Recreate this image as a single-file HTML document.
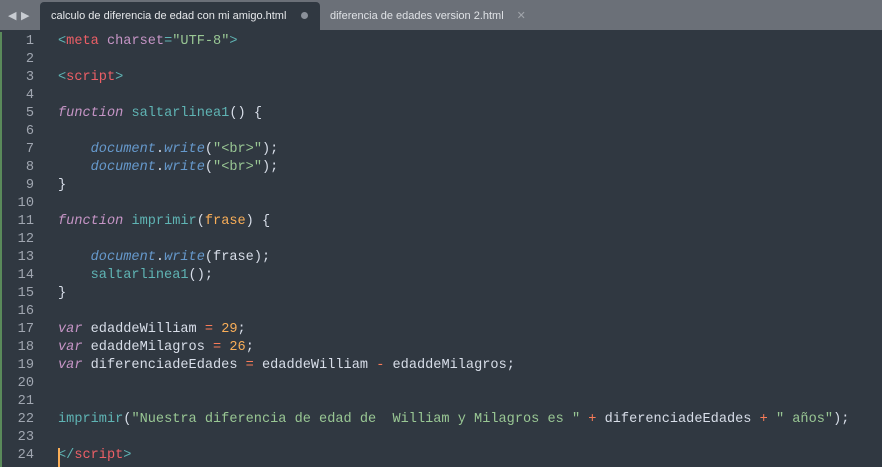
<!DOCTYPE html>
<html><head><meta charset="UTF-8"><style>
body{margin:0;width:882px;height:467px;background:#303841;overflow:hidden;font-family:"Liberation Sans",sans-serif}
.bar{position:absolute;left:0;top:0;width:882px;height:30px;background:#6b7078}
.arr{position:absolute;top:9px;color:#c8ccd2;font-size:11px}
.tab{position:absolute;top:2px;height:28px;font-size:11px;line-height:28px;color:#e6e8eb}
.t1{left:40px;width:280px;background:#303841;border-radius:4px 4px 0 0;padding-left:11px;box-sizing:border-box}
.t2{left:330px;color:#dfe2e6}
.code{position:absolute;top:33px;left:0;font-family:"Liberation Mono",monospace;font-size:13.6px;line-height:18px;color:#d8dee9;white-space:pre}
.ln{position:absolute;left:0;top:0;width:34px;text-align:right;color:#a0a6b0}
.tx{position:absolute;left:58px;top:0}
.k{color:#c695c6;font-style:italic}.f{color:#5fb4b4}.r{color:#ec5f66}.s{color:#99c794}.n{color:#f9ae58}.o{color:#f97b58}.b{color:#6699cc;font-style:italic}.p{color:#5fb4b4}
.gb{position:absolute;left:0;top:32px;width:2px;height:435px;background:#5a8a5a}
</style></head><body>
<div class="bar"></div>
<div class="arr" style="left:8px">◀</div><div class="arr" style="left:21px">▶</div>
<div class="tab t1">calculo de diferencia de edad con mi amigo.html<span style="position:absolute;left:261px;top:10px;width:7px;height:7px;border-radius:50%;background:#8a9099"></span></div>
<div class="tab t2">diferencia de edades version 2.html<span style="margin-left:13px;color:#a0a4aa">✕</span></div>
<div class="gb"></div>
<div class="code"><div class="ln">1
2
3
4
5
6
7
8
9
10
11
12
13
14
15
16
17
18
19
20
21
22
23
24</div><div class="tx"><span class="p">&lt;</span><span class="r">meta</span> <span class="k" style="font-style:normal">charset</span><span class="p">=</span><span class="s">"UTF-8"</span><span class="p">&gt;</span>

<span class="p">&lt;</span><span class="r">script</span><span class="p">&gt;</span>

<span class="k">function</span> <span class="f">saltarlinea1</span>() {

    <span class="b">document</span>.<span class="b">write</span>(<span class="s">"&lt;br&gt;"</span>);
    <span class="b">document</span>.<span class="b">write</span>(<span class="s">"&lt;br&gt;"</span>);
}

<span class="k">function</span> <span class="f">imprimir</span>(<span class="n">frase</span>) {

    <span class="b">document</span>.<span class="b">write</span>(frase);
    <span class="f">saltarlinea1</span>();
}

<span class="k">var</span> edaddeWilliam <span class="o">=</span> <span class="n">29</span>;
<span class="k">var</span> edaddeMilagros <span class="o">=</span> <span class="n">26</span>;
<span class="k">var</span> diferenciadeEdades <span class="o">=</span> edaddeWilliam <span class="o">-</span> edaddeMilagros;


<span class="f">imprimir</span>(<span class="s">"Nuestra diferencia de edad de  William y Milagros es "</span> <span class="o">+</span> diferenciadeEdades <span class="o">+</span> <span class="s">" años"</span>);

<span class="p">&lt;/</span><span class="r">script</span><span class="p">&gt;</span></div></div>
<div style="position:absolute;left:58px;top:448px;width:2px;height:19px;background:#f9ae58"></div>
</body></html>
